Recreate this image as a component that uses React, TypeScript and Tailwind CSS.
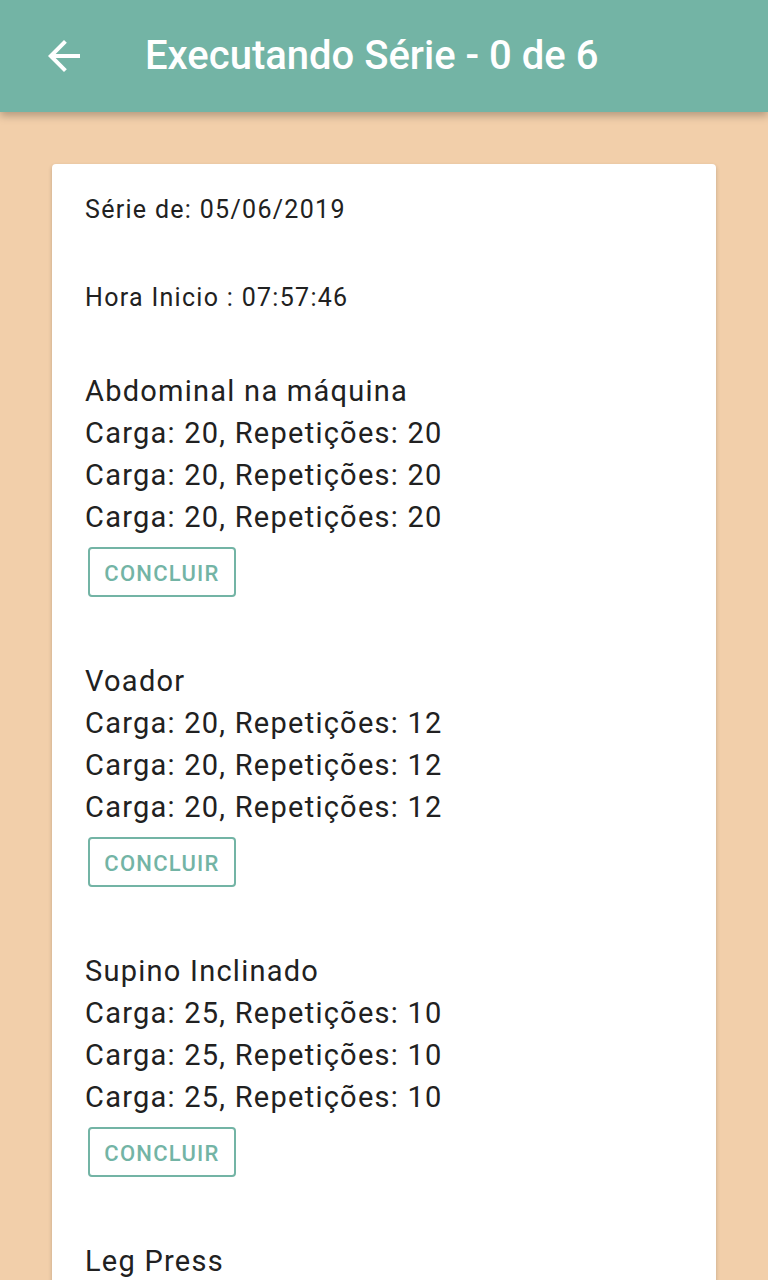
import React from "react";

const exercises = [
  { name: "Abdominal na máquina", sets: ["Carga: 20, Repetições: 20", "Carga: 20, Repetições: 20", "Carga: 20, Repetições: 20"] },
  { name: "Voador", sets: ["Carga: 20, Repetições: 12", "Carga: 20, Repetições: 12", "Carga: 20, Repetições: 12"] },
  { name: "Supino Inclinado", sets: ["Carga: 25, Repetições: 10", "Carga: 25, Repetições: 10", "Carga: 25, Repetições: 10"] },
  { name: "Leg Press", sets: ["Carga: 40, Repetições: 12", "Carga: 40, Repetições: 12", "Carga: 40, Repetições: 12"] },
];

export default function App() {
  return (
    <div className="h-[1280px] w-[768px] overflow-hidden bg-[#f2cfaa] font-['Roboto',sans-serif] text-[#212121]">
      <header className="relative z-10 flex h-[112px] items-center bg-[#73b4a5] shadow-[0_4px_8px_rgba(0,0,0,0.25)]">
        <div className="ml-[40px] flex h-[48px] w-[48px] items-center justify-center">
          <svg width="48" height="48" viewBox="0 0 24 24" fill="#ffffff">
            <path d="M20 11H7.83l5.59-5.59L12 4l-8 8 8 8 1.41-1.41L7.83 13H20v-2z" />
          </svg>
        </div>
        <h1 className="ml-[57px] text-[40px] font-medium leading-none text-white">Executando Série - 0 de 6</h1>
      </header>
      <main className="px-[52px] pt-[52px]">
        <div className="rounded-[4px] bg-white px-[33px] pt-[30px] pb-[40px] shadow-[0_2px_4px_rgba(0,0,0,0.2)]">
          <p className="text-[25px] leading-[32px] tracking-[1.3px]">Série de: 05/06/2019</p>
          <p className="mt-[56px] text-[25px] leading-[32px] tracking-[1.3px]">Hora Inicio : 07:57:46</p>
          <div className="mt-[56px] flex flex-col gap-[63px]">
            {exercises.map((ex) => (
              <div key={ex.name} className="flex flex-col">
                <p className="text-[29px] leading-[42px] tracking-[1.25px]">{ex.name}</p>
                {ex.sets.map((s, i) => (
                  <p key={i} className="text-[29px] leading-[42px] tracking-[1.25px]">{s}</p>
                ))}
                <button className="ml-[3px] mt-[9px] flex h-[50px] w-[148px] items-center justify-center rounded-[4px] border-2 border-[#73b4a5] bg-white pt-[3px] text-[22px] font-medium tracking-[1.25px] text-[#73b4a5]">
                  CONCLUIR
                </button>
              </div>
            ))}
          </div>
        </div>
      </main>
    </div>
  );
}
